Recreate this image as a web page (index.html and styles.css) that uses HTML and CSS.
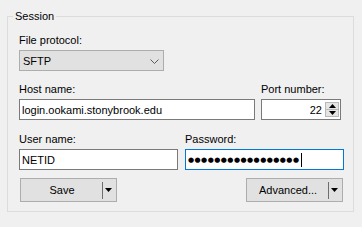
FILE: index.html
```html
<!DOCTYPE html>
<html>
<head>
<meta charset="utf-8">
<link rel="stylesheet" href="styles.css">
</head>
<body>
<div class="group">
  <span class="group-title">Session</span>
  <div class="field">
    <span class="label">File protocol:</span>
    <div class="combo">
      <span>SFTP</span>
      <svg class="chev" width="9" height="5" viewBox="0 0 9 5"><path d="M0.5 0.5 L4.5 4.5 L8.5 0.5" fill="none" stroke="#5a5a5a" stroke-width="1"/></svg>
    </div>
  </div>
  <div class="row row-host">
    <div class="field host">
      <span class="label">Host name:</span>
      <div class="input">login.ookami.stonybrook.edu</div>
    </div>
    <div class="field port">
      <span class="label">Port number:</span>
      <div class="input num">
        <span class="num-val">22</span>
        <span class="spin">
          <span class="spin-btn"><svg width="7" height="4" viewBox="0 0 7 4"><path d="M3.5 0 L7 4 L0 4 Z" fill="#000"/></svg></span>
          <span class="spin-btn"><svg width="7" height="4" viewBox="0 0 7 4"><path d="M0 0 L7 0 L3.5 4 Z" fill="#000"/></svg></span>
        </span>
      </div>
    </div>
  </div>
  <div class="row row-user">
    <div class="field half">
      <span class="label">User name:</span>
      <div class="input">NETID</div>
    </div>
    <div class="field half">
      <span class="label">Password:</span>
      <div class="input focused"><span class="dots">●●●●●●●●●●●●●●●●●</span><span class="caret"></span></div>
    </div>
  </div>
  <div class="row buttons">
    <div class="btn"><span class="btn-main">Save</span><span class="btn-sep"></span><svg class="btn-arrow" width="7" height="4" viewBox="0 0 7 4"><path d="M0 0 L7 0 L3.5 4 Z" fill="#000"/></svg></div>
    <div class="btn"><span class="btn-main">Advanced...</span><span class="btn-sep"></span><svg class="btn-arrow" width="7" height="4" viewBox="0 0 7 4"><path d="M0 0 L7 0 L3.5 4 Z" fill="#000"/></svg></div>
  </div>
</div>
</body>
</html>
```
FILE: styles.css
```css
* { box-sizing: border-box; }
html, body { margin: 0; padding: 0; }
body {
  width: 362px;
  height: 227px;
  overflow: hidden;
  background: #f0f0f0;
  font-family: "Liberation Sans", Arial, sans-serif;
  font-size: 11px;
  color: #000;
}
.group {
  position: relative;
  margin: 16px 0 0 7px;
  width: 347px;
  height: 196px;
  border: 1px solid #dcdcdc;
  padding: 16px 9px 0 11px;
  display: flex;
  flex-direction: column;
}
.group-title {
  position: absolute;
  top: -8px;
  left: 5px;
  padding: 0 2px;
  background: #f0f0f0;
  line-height: 15px;
}
.field { display: flex; flex-direction: column; }
.label {
  display: block;
  height: 15px;
  line-height: 15px;
  margin-bottom: 2px;
  white-space: nowrap;
}
.combo {
  width: 145px;
  height: 21px;
  border: 1px solid #adadad;
  background: #e1e1e1;
  display: flex;
  align-items: center;
  justify-content: space-between;
  padding: 0 4px 0 3px;
}
.chev { margin-top: 1px; }
.row { display: flex; }
.row-host { margin-top: 11px; gap: 6px; }
.row-user { margin-top: 12px; gap: 7px; }
.host { width: 236px; }
.port { width: 80px; }
.half { width: 159px; }
.input {
  height: 21px;
  border: 1px solid #7a7a7a;
  background: #fff;
  display: flex;
  align-items: center;
  padding: 0 2px;
  white-space: nowrap;
  overflow: hidden;
}
.input.focused { border-color: #0078d7; }
.num { justify-content: flex-end; padding-right: 1px; }
.num-val { margin-right: 3px; }
.spin {
  display: flex;
  flex-direction: column;
  width: 14px;
}
.spin-btn {
  height: 8px;
  background: #e5e5e5;
  border: 1px solid #b9b9b9;
  display: flex;
  align-items: center;
  justify-content: center;
}
.spin-btn + .spin-btn { margin-top: -1px; }
.dots {
  font-family: "DejaVu Sans", sans-serif;
  font-size: 7px;
  letter-spacing: 0.45px;
  line-height: 10px;
}
.caret {
  width: 1px;
  height: 14px;
  background: #000;
  margin-left: 1px;
}
.buttons {
  margin-top: 8px;
  justify-content: space-between;
  padding: 0 1px;
}
.btn {
  width: 97px;
  height: 24px;
  border: 1px solid #adadad;
  background: #e1e1e1;
  display: flex;
  align-items: center;
  padding-right: 4px;
}
.btn-main { flex: 1; text-align: center; padding-left: 1px; }
.btn-sep {
  width: 1px;
  height: 17px;
  background: #6d6d6d;
  margin-right: 2px;
}
.btn-arrow { flex: none; }
```
